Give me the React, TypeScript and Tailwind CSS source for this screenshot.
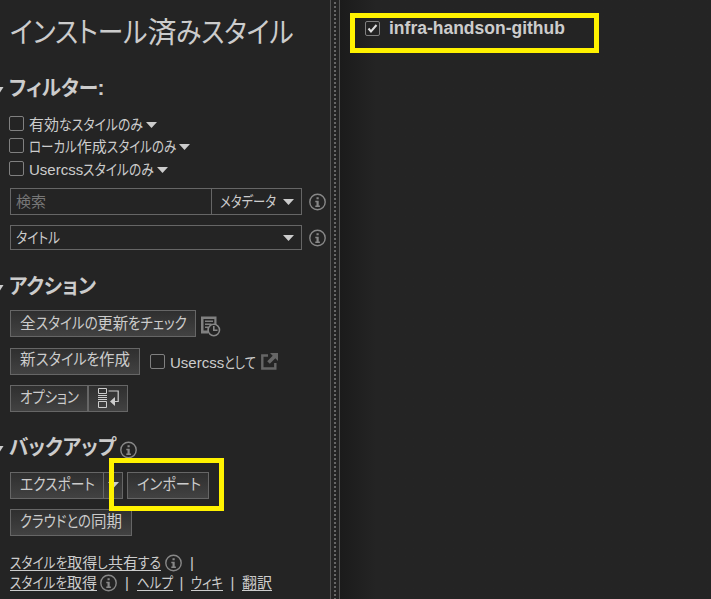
import { useLayoutEffect, useRef, type ReactNode } from 'react';

const KANA = /([\u3040-\u30ff]+)/;

/** Text with condensed kana that fills exactly `w` pixels; kanji and Latin keep their own width. */
function Fit({ w, className = '', children }: { w: number; className?: string; children: string }) {
  const ref = useRef<HTMLSpanElement>(null);
  const parts = children.split(KANA).filter(Boolean);
  useLayoutEffect(() => {
    const fit = () => {
      const root = ref.current;
      if (!root) return;
      const outer = Array.from(root.children) as HTMLElement[];
      const inner = outer.map((o) => o.firstElementChild as HTMLElement);
      const widths = inner.map((i) => i.offsetWidth && parseFloat(getComputedStyle(i).width));
      let fixed = 0;
      let kana = 0;
      widths.forEach((n, i) => {
        if (KANA.test(parts[i])) kana += n;
        else fixed += n;
      });
      inner.forEach((el, i) => {
        const k = kana === 0 ? w / fixed : KANA.test(parts[i]) ? (w - fixed) / kana : 1;
        el.style.transform = `scaleX(${k})`;
        outer[i].style.width = `${widths[i] * k}px`;
      });
    };
    fit();
    document.fonts.ready.then(fit);
  });
  return (
    <span ref={ref} className={`inline-flex shrink-0 whitespace-nowrap ${className}`}>
      {parts.map((p, i) => (
        <span key={i} className="inline-block">
          <span className="inline-block origin-left">{p}</span>
        </span>
      ))}
    </span>
  );
}

function Arrow({ className = '' }: { className?: string }) {
  return (
    <svg className={`shrink-0 ${className}`} width="11" height="6" viewBox="0 0 11 6">
      <path d="M0 0h11L5.500 6z" fill="#ccc" />
    </svg>
  );
}

function Info({ className = '' }: { className?: string }) {
  return (
    <svg className={`shrink-0 ${className}`} width="17" height="18" viewBox="0 0 17 18" fill="none">
      <circle cx="8.500" cy="9" r="7.700" stroke="#888" strokeWidth="1.400" />
      <path d="M7.500 4.300h2.200v2H7.500zM6.300 7.700h3.400v4.800h1.200V14H6.300v-1.500h1.200V9.200H6.300z" fill="#888" />
    </svg>
  );
}

function Check({ checked = false }: { checked?: boolean }) {
  return (
    <span className="flex size-[15px] shrink-0 items-center justify-center rounded-[2px] border border-[#808080]">
      {checked && (
        <svg width="11" height="11" viewBox="0 0 11 11" fill="none">
          <path d="M1.500 5.500 4 8.500 9.500 2" stroke="#ddd" strokeWidth="2" />
        </svg>
      )}
    </span>
  );
}

function Filter({ w, children }: { w: number; children: string }) {
  return (
    <div className="flex h-[22.4px] items-start pl-[9px]">
      <Check />
      <Fit w={w} className="mt-px ml-[5px] h-4 items-center leading-4">{children}</Fit>
      <Arrow className="mt-[6px] ml-[3px]" />
    </div>
  );
}

const button = 'flex h-[27px] shrink-0 items-center border border-[#666] bg-linear-to-b from-[#2f2f2f] to-[#424242] text-[15.5px]';

function Heading({ w, children, extra }: { w: number; children: string; extra?: ReactNode }) {
  return (
    <div className="flex h-[30px] items-center text-[21px] leading-[30px] font-bold">
      <svg className="mt-[5px] shrink-0" width="4" height="6" viewBox="0 0 4 6">
        <path d="M0 0h3.500L0 5.500z" fill="#ccc" />
      </svg>
      <Fit w={w} className="mt-px ml-[4.500px]">{children}</Fit>
      {extra}
    </div>
  );
}

function Link({ w, children }: { w: number; children: string }) {
  return (
    <a className="flex h-[17px] items-center border-b border-[#ccc]">
      <Fit w={w} className="mt-[2px]">{children}</Fit>
    </a>
  );
}

function Bar({ className = '' }: { className?: string }) {
  return <span className={`mt-px w-[5px] shrink-0 text-center leading-4 ${className}`}>|</span>;
}

export default function App() {
  return (
    <div className="relative flex h-[599px] w-[711px] overflow-hidden bg-[#242424] font-['Liberation_Sans','Noto_Sans_CJK_JP',sans-serif] text-[15px] leading-4 text-[#ccc] [font-feature-settings:'palt']">
      <aside className="flex h-full w-[330px] shrink-0 flex-col">
        <h1 className="mt-[11px] flex h-11 items-center pl-[10px] text-[29px] leading-[44px]">
          <Fit w={284}>インストール済みスタイル</Fit>
        </h1>

        <div className="mt-[17px]">
          <Heading w={96}>フィルター:</Heading>
        </div>
        <div className="mt-[14px]">
          <Filter w={114}>有効なスタイルのみ</Filter>
          <Filter w={147}>ローカル作成スタイルのみ</Filter>
          <Filter w={125}>Usercssスタイルのみ</Filter>
        </div>
        <div className="mt-[4.800px] flex h-[27px] items-center pl-[10px]">
          <div className="flex h-[27px] w-[202px] items-center border border-[#666] pl-[5px] text-[#777]">
            <Fit w={30} className="mt-px">検索</Fit>
          </div>
          <div className="flex h-[27px] w-[90px] items-center border border-l-0 border-[#666] pl-2">
            <Fit w={56} className="mt-px">メタデータ</Fit>
            <Arrow className="mt-px ml-[7px]" />
          </div>
          <Info className="mt-[2px] ml-[7px]" />
        </div>
        <div className="mt-[10px] flex h-[25px] items-center pl-[10px]">
          <div className="flex h-[25px] w-[292px] items-center justify-between border border-[#666] pr-[7px] pl-[5px]">
            <Fit w={44} className="mt-[2px]">タイトル</Fit>
            <Arrow className="mt-[2px]" />
          </div>
          <Info className="mt-[2px] ml-[7px]" />
        </div>

        <div className="mt-[21px]">
          <Heading w={87}>アクション</Heading>
        </div>
        <div className="mt-[9px] flex h-[27px] items-center pl-[10px]">
          <div className={`${button} w-[186px] pl-[9px]`}>
            <Fit w={167} className="mt-px">全スタイルの更新をチェック</Fit>
          </div>
          <svg className="mt-[6px] ml-[5px]" width="20" height="21" viewBox="0 0 20 21" fill="none">
            <path d="M0 .500h15.500v8h-2.200V3H2.500v11.500H7V17.500H0z" fill="#808080" />
            <path d="M4 5.200h8M4 8.200h6.500M4 11.200h3.500" stroke="#808080" strokeWidth="1.600" />
            <circle cx="12.800" cy="14" r="5.700" stroke="#888" strokeWidth="1.600" />
            <path d="M12.800 10V14.300h3.700" stroke="#888" strokeWidth="1.600" />
          </svg>
        </div>
        <div className="mt-[11px] flex h-[27px] items-center pl-[10px]">
          <div className={`${button} mr-[10px] w-[130px] pl-[9px]`}>
            <Fit w={110} className="-mt-[2px]">新スタイルを作成</Fit>
          </div>
          <Check />
          <Fit w={86} className="mt-[3px] ml-[5px]">Usercssとして</Fit>
          <svg className="ml-[5px]" width="17" height="17" viewBox="0 0 17 17" fill="none">
            <path d="M7 2.500H1.300v13h13V10" stroke="#666" strokeWidth="2.400" />
            <path d="M9 0h8v8l-2.700-2.700-5.500 5.500-2.600-2.600 5.500-5.500z" fill="#666" />
          </svg>
        </div>
        <div className="mt-[10px] flex h-[27px] items-center pl-[10px]">
          <div className={`${button} w-[78px] pl-[9px]`}>
            <Fit w={59} className="-mt-px">オプション</Fit>
          </div>
          <div className={`${button} w-[40px] pl-[9px]`}>
            <svg width="21" height="20" viewBox="0 0 21 20" fill="none" stroke="#ccc">
              <path d="M.5.500h8v5h-8zM.5 13.500h8v6h-8z" />
              <path d="M0 7.500h9M0 9.500h9M0 11.500h9" strokeWidth="1" />
              <path d="M10.500 3h9.700v10.500H16" strokeWidth="1.200" />
              <path d="M17 9v9L12 13.500z" fill="#ccc" stroke="none" />
            </svg>
          </div>
        </div>

        <div className="mt-[20px]">
          <Heading w={107} extra={<Info className="mt-[7px] ml-[4.500px]" />}>バックアップ</Heading>
        </div>
        <div className="mt-[10px] flex h-[27px] items-center pl-[10px]">
          <div className={`${button} w-[94px] pl-[9px]`}>
            <Fit w={75} className="-mt-px">エクスポート</Fit>
          </div>
          <div className={`${button} w-[19px] justify-center border-l-0`}>
            <Arrow />
          </div>
          <div className={`${button} ml-1 w-[82px] pl-[9px]`}>
            <Fit w={64} className="-mt-px">インポート</Fit>
          </div>
        </div>
        <div className="mt-[10px] flex h-[27px] items-center pl-[10px]">
          <div className={`${button} w-[122px] pl-[9px]`}>
            <Fit w={102} className="-mt-px">クラウドとの同期</Fit>
          </div>
        </div>

        <div className="mt-[18px] flex h-[20px] items-start pl-[10px]">
          <Link w={151}>スタイルを取得し共有する</Link>
          <Info className="ml-[4.500px]" />
          <Bar className="ml-[7px]" />
        </div>
        <div className="flex h-[20px] items-start pl-[10px]">
          <Link w={87}>スタイルを取得</Link>
          <Info className="ml-[3.500px]" />
          <Bar className="mr-[7.500px] ml-[7px]" />
          <Link w={36}>ヘルプ</Link>
          <Bar className="mr-[7px] ml-[6px]" />
          <Link w={32}>ウィキ</Link>
          <Bar className="mr-[7px] ml-[7px]" />
          <Link w={30}>翻訳</Link>
        </div>
      </aside>

      <div className="flex w-[10px] shrink-0 justify-center border-x border-[#555] pt-[2px]">
        <svg width="2" height="597">
          <path d="M1 0v597" stroke="#666" strokeWidth="2" strokeDasharray="2 2" />
        </svg>
      </div>

      <main className="flex flex-1 items-start bg-linear-to-r from-[#1b1b1b] to-[#242424] to-[36px] pt-[21px] pl-[25px]">
        <Check checked />
        <span className="mt-[-3px] ml-[9px] text-[17.500px] leading-5 font-bold">infra-handson-github</span>
      </main>

      <div className="absolute top-[13px] left-[350px] h-10 w-[249px] border-[5px] border-[#fff200]" />
      <div className="absolute top-[458px] left-[109px] h-[53px] w-[115px] border-[5px] border-[#fff200]" />
    </div>
  );
}
